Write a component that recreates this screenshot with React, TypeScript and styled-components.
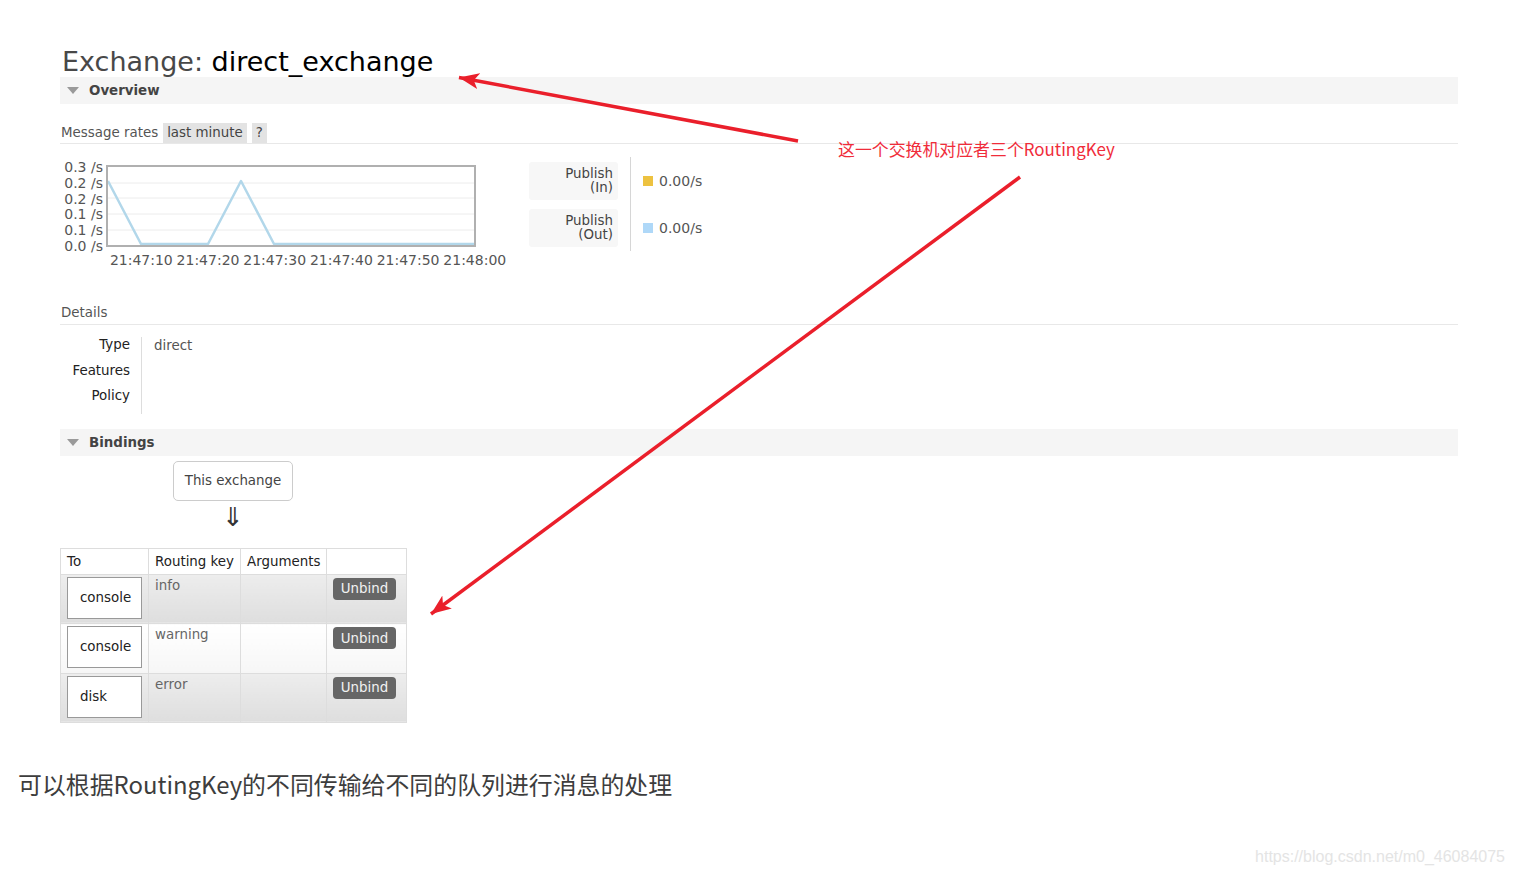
import styled, { createGlobalStyle } from 'styled-components';

const GlobalStyle = createGlobalStyle`
    html, body {
        margin: 0;
        padding: 0;
        background: #fff;
    }
    body {
        font-family: "DejaVu Sans", Verdana, sans-serif;
    }
`

const Page = styled.div`
    position: relative;
    width: 1514px;
    height: 875px;
    overflow: hidden;
`

const Shot = styled.div`
    width: 1398px;
    margin-left: 60px;
    padding-top: 47px;
    font-size: 13.4px;
    color: #444;
`

const Title = styled.h1`
    margin: 0;
    font-weight: normal;
    font-size: 27px;
    line-height: 30px;
    color: #484848;
    padding-left: 2px;

    b {
        font-weight: normal;
        color: #000;
    }
`

const SectionBar = styled.div<{ $top?: number }>`
    display: flex;
    align-items: center;
    gap: 10px;
    height: 27px;
    margin-top: ${p => p.$top ?? 0}px;
    padding-left: 7px;
    background: #f5f5f5;
    font-weight: bold;
    color: #444;
`

const Toggle = styled.span`
    width: 0;
    height: 0;
    border-left: 6px solid transparent;
    border-right: 6px solid transparent;
    border-top: 7px solid #9a9a9a;
`

const RatesHeader = styled.div`
    display: flex;
    gap: 5px;
    height: 20px;
    margin-top: 19px;
    border-bottom: 1px solid #e8e8e8;
    line-height: 20px;
    color: #555;
    padding-left: 1px;
`

const Pill = styled.span`
    padding: 0 4px;
    background: #e3e3e3;
    color: #444;
`

const ChartRow = styled.div`
    display: flex;
    gap: 53px;
    margin-top: 13px;
`

const Chart = styled.div`
    display: grid;
    grid-template-columns: 45px 370px;
    padding-top: 3px;
    margin-left: 1px;
    font-size: 14px;
    color: #555;
`

const YAxis = styled.div`
    display: flex;
    flex-direction: column;
    justify-content: space-between;
    height: 93px;
    padding-right: 3px;
    text-align: right;
    line-height: 14px;
    white-space: nowrap;
`

const Plot = styled.svg`
    display: block;
    margin-top: 5px;
`

const XAxis = styled.div`
    grid-column: 2;
    display: flex;
    padding-left: 2px;
    line-height: 14px;
    white-space: nowrap;

    span {
        flex: 0 0 66.7px;
        text-align: center;
    }
`

const Legend = styled.div`
    display: grid;
    grid-template-columns: 101px auto;
    grid-auto-rows: 47px;
`

const LegendLabel = styled.div`
    display: flex;
    align-items: center;
    padding-right: 12px;
`

const LegendBox = styled.div`
    display: flex;
    flex-direction: column;
    align-items: flex-end;
    justify-content: center;
    width: 89px;
    height: 38px;
    box-sizing: border-box;
    padding-right: 5px;
    background: #f7f7f7;
    border-radius: 3px;
    line-height: 14px;
    color: #444;
`

const LegendValue = styled.div`
    display: flex;
    align-items: center;
    gap: 6px;
    padding-left: 12px;
    border-left: 1px solid #d6d6d6;
    font-size: 14px;
    color: #555;
`

const Swatch = styled.span<{ $color: string }>`
    width: 10px;
    height: 10px;
    background: ${p => p.$color};
`

const DetailsHeading = styled.div`
    margin-top: 37px;
    padding-left: 1px;
    padding-bottom: 2px;
    line-height: 18px;
    border-bottom: 1px solid #e8e8e8;
    color: #555;
`

const DetailsTable = styled.div`
    display: grid;
    grid-template-columns: 82px auto;
    margin-top: 12px;
    width: 220px;
`

const DetailKeys = styled.div`
    display: flex;
    flex-direction: column;
    padding-right: 11px;
    border-right: 1px solid #ddd;
    text-align: right;
    color: #222;

    span {
        height: 25.5px;
        line-height: 16px;
    }
`

const DetailValues = styled.div`
    padding-left: 12px;
    line-height: 18px;
    color: #555;
`

const ExchangeBox = styled.div`
    display: flex;
    align-items: center;
    justify-content: center;
    width: 120px;
    height: 40px;
    box-sizing: border-box;
    margin: 5px 0 0 113px;
    border: 1px solid #ccc;
    border-radius: 5px;
    color: #444;
`

const DownArrow = styled.div`
    width: 120px;
    margin: 3px 0 0 113px;
    text-align: center;
    font-size: 26px;
    line-height: 26px;
    color: #333;
`

const BindingsTable = styled.table`
    margin-top: 18px;
    border-collapse: collapse;
    border: 1px solid #ddd;
    table-layout: fixed;
    width: 346px;

    th, td {
        border: 1px solid #ddd;
        padding: 0 6px;
        text-align: left;
        font-size: 13.4px;
        white-space: nowrap;
    }

    th {
        height: 25px;
        padding-right: 0;
        font-weight: normal;
        color: #222;
        background: #fff;
    }
`

const BindingRow = styled.tr<{ $alt: boolean }>`
    td {
        height: 49.5px;
        vertical-align: top;
        padding-top: 3px;
        box-sizing: border-box;
        background: ${p => p.$alt
            ? 'linear-gradient(#ededed, #dedede)'
            : 'linear-gradient(#fff, #f6f6f6)'};
        color: #666;
        line-height: 16px;
    }

    td:first-child {
        padding-top: 2px;
    }
`

const QueueBox = styled.div`
    display: flex;
    align-items: center;
    width: 75px;
    height: 42px;
    box-sizing: border-box;
    padding-left: 12px;
    background: #fff;
    border: 1px solid #999;
    color: #222;
`

const UnbindButton = styled.button`
    width: 63px;
    height: 22px;
    padding: 0;
    border: none;
    border-radius: 4px;
    background: #666;
    color: #f2f2f2;
    font-family: "DejaVu Sans", Verdana, sans-serif;
    font-size: 13.4px;
`

const Caption = styled.p`
    margin: 44px 0 0 18px;
    font-family: "Noto Sans CJK SC", sans-serif;
    font-size: 23.9px;
    line-height: 34px;
    color: #3d3d3d;
`

const Watermark = styled.div`
    position: absolute;
    right: 9px;
    bottom: 9px;
    font-family: "Liberation Sans", Arial, sans-serif;
    font-size: 16px;
    line-height: 18px;
    color: #e4e4e4;
`

const Note = styled.div`
    position: absolute;
    left: 838px;
    top: 139px;
    font-family: "Noto Sans CJK SC", sans-serif;
    font-size: 16.9px;
    line-height: 20px;
    color: #f02c3a;
`

const Overlay = styled.svg`
    position: absolute;
    left: 0;
    top: 0;
    pointer-events: none;
`

const yLabels = ['0.3 /s', '0.2 /s', '0.2 /s', '0.1 /s', '0.1 /s', '0.0 /s'];
const xLabels = ['21:47:10', '21:47:20', '21:47:30', '21:47:40', '21:47:50', '21:48:00'];

const bindings = [
    { queue: 'console', key: 'info' },
    { queue: 'console', key: 'warning' },
    { queue: 'disk', key: 'error' },
];

export default function App() {
    return (
        <Page>
            <GlobalStyle />
            <Shot>
                <Title>Exchange: <b>direct_exchange</b></Title>
                <SectionBar><Toggle />Overview</SectionBar>

                <RatesHeader>
                    Message rates <Pill>last minute</Pill><Pill>?</Pill>
                </RatesHeader>

                <ChartRow>
                    <Chart>
                        <YAxis>
                            {yLabels.map((l, i) => <span key={i}>{l}</span>)}
                        </YAxis>
                        <Plot width="370" height="82" viewBox="0 0 370 82">
                            {[18, 33, 49, 65].map(y => (
                                <line key={y} x1="2" x2="368" y1={y} y2={y} stroke="#ececec" strokeWidth="1" />
                            ))}
                            <polyline points="2,16 35,79 102,79 135,16 168,79 368,79"
                                      fill="none" stroke="#b2d7ea" strokeWidth="2.5" strokeLinejoin="round" />
                            <rect x="1" y="1" width="368" height="80" fill="none" stroke="#b0b0b0" strokeWidth="2" />
                        </Plot>
                        <XAxis>
                            {xLabels.map(l => <span key={l}>{l}</span>)}
                        </XAxis>
                    </Chart>

                    <Legend>
                        <LegendLabel><LegendBox><span>Publish</span><span>(In)</span></LegendBox></LegendLabel>
                        <LegendValue><Swatch $color="#edc240" />0.00/s</LegendValue>
                        <LegendLabel><LegendBox><span>Publish</span><span>(Out)</span></LegendBox></LegendLabel>
                        <LegendValue><Swatch $color="#afd8f8" />0.00/s</LegendValue>
                    </Legend>
                </ChartRow>

                <DetailsHeading>Details</DetailsHeading>
                <DetailsTable>
                    <DetailKeys>
                        <span>Type</span>
                        <span>Features</span>
                        <span>Policy</span>
                    </DetailKeys>
                    <DetailValues>direct</DetailValues>
                </DetailsTable>

                <SectionBar $top={15}><Toggle />Bindings</SectionBar>
                <ExchangeBox>This exchange</ExchangeBox>
                <DownArrow>⇓</DownArrow>

                <BindingsTable>
                    <colgroup>
                        <col style={{ width: 88 }} />
                        <col style={{ width: 92 }} />
                        <col style={{ width: 86 }} />
                        <col style={{ width: 80 }} />
                    </colgroup>
                    <thead>
                        <tr>
                            <th>To</th>
                            <th>Routing key</th>
                            <th>Arguments</th>
                            <th></th>
                        </tr>
                    </thead>
                    <tbody>
                        {bindings.map((b, i) => (
                            <BindingRow key={b.key} $alt={i % 2 === 0}>
                                <td><QueueBox>{b.queue}</QueueBox></td>
                                <td>{b.key}</td>
                                <td></td>
                                <td><UnbindButton>Unbind</UnbindButton></td>
                            </BindingRow>
                        ))}
                    </tbody>
                </BindingsTable>
            </Shot>

            <Caption>可以根据RoutingKey的不同传输给不同的队列进行消息的处理</Caption>

            <Note>这一个交换机对应者三个RoutingKey</Note>
            <Overlay width="1514" height="875" viewBox="0 0 1514 875">
                <defs>
                    <marker id="head" markerUnits="userSpaceOnUse" markerWidth="22" markerHeight="16"
                            refX="20" refY="8" orient="auto">
                        <path d="M0,0 L20,8 L0,16 L5,8 z" fill="#ea1f2b" />
                    </marker>
                </defs>
                <line x1="798" y1="141" x2="459" y2="77.5" stroke="#ea1f2b" strokeWidth="3.5" markerEnd="url(#head)" />
                <line x1="1020" y1="177" x2="431" y2="614" stroke="#ea1f2b" strokeWidth="3.5" markerEnd="url(#head)" />
            </Overlay>
            <Watermark>https://blog.csdn.net/m0_46084075</Watermark>
        </Page>
    );
}
